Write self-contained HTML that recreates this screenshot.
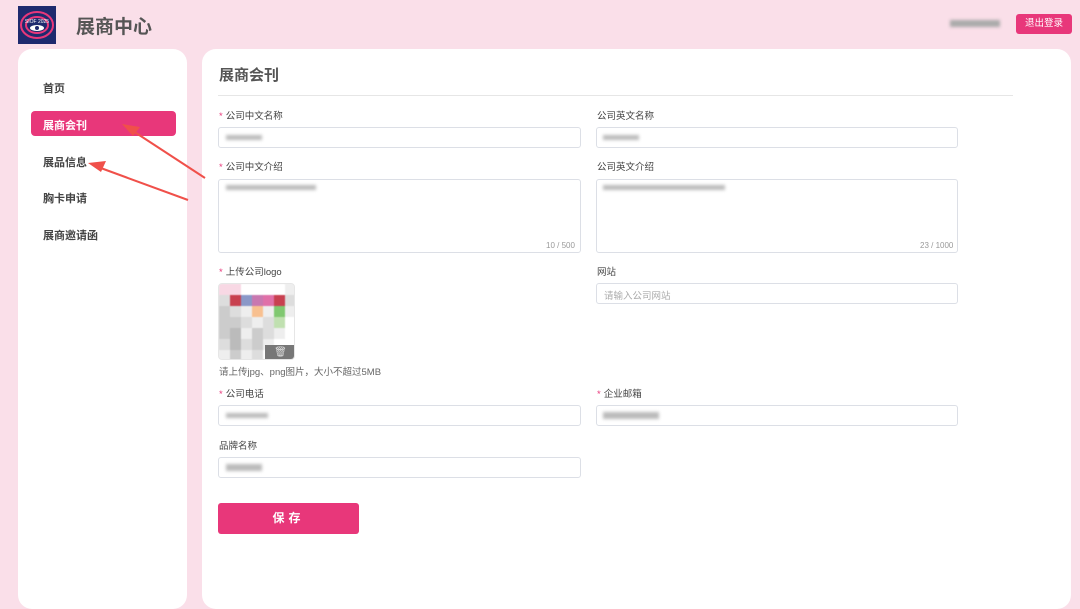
<!DOCTYPE html>
<html><head><meta charset="utf-8"><style>
*{margin:0;padding:0;box-sizing:border-box}
body{width:1080px;height:596px;background:#fadfe9;font-family:"Liberation Sans","Noto Sans CJK SC",sans-serif;position:relative;overflow:hidden;color:#333}
.a{position:absolute}
.card{position:absolute;background:#fff;border-radius:14px}
.menu{position:absolute;left:43px;font-size:11px;font-weight:bold;color:#444}
.lbl{position:absolute;font-size:9.5px;color:#444}
.lbl b{color:#e8377a;font-weight:normal;margin-right:3px}
.inp{position:absolute;border:1px solid #dcdfe6;border-radius:3px;background:#fff}
.blur{position:absolute;background:#bbb;filter:blur(1.5px);height:5px}
.cnt{position:absolute;font-size:8px;color:#999}
</style></head><body>
<svg class="a" style="left:18px;top:6px" width="38" height="38" viewBox="0 0 38 38">
<rect width="38" height="38" fill="#1e2a6e"/>
<g fill="none" stroke="#e8377a" stroke-width="2">
<ellipse cx="19" cy="19" rx="16" ry="13"/><ellipse cx="19" cy="19" rx="11" ry="8"/></g>
<ellipse cx="19" cy="22" rx="7" ry="3" fill="#fff"/><circle cx="19" cy="22" r="2" fill="#1e2a6e"/>
<text x="19" y="17" font-size="5" fill="#fff" text-anchor="middle" font-family="Liberation Sans">SIOF 2025</text>
</svg>
<div class="a" style="left:76px;top:12px;font-size:19px;font-weight:bold;color:#555">展商中心</div>
<div class="blur" style="left:950px;top:20px;width:50px;height:7px;background:#aaa"></div>
<div class="a" style="left:1016px;top:14px;width:56px;height:20px;background:#e8377a;border-radius:3px;color:#fff;font-size:9.5px;text-align:center;line-height:20px">退出登录</div>

<div class="card" style="left:18px;top:49px;width:169px;height:560px"></div>
<div class="menu" style="top:80px">首页</div>
<div class="a" style="left:31px;top:111px;width:145px;height:25px;background:#e8377a;border-radius:4px"></div>
<div class="menu" style="top:117px;color:#fff">展商会刊</div>
<div class="menu" style="top:154px">展品信息</div>
<div class="menu" style="top:190px">胸卡申请</div>
<div class="menu" style="top:227px">展商邀请函</div>

<div class="card" style="left:202px;top:49px;width:869px;height:560px"></div>
<div class="a" style="left:219px;top:64px;font-size:15px;font-weight:bold;color:#555">展商会刊</div>
<div class="a" style="left:218px;top:95px;width:795px;height:1px;background:#e6e6e6"></div>

<div class="lbl" style="left:219px;top:108px"><b>*</b>公司中文名称</div>
<div class="inp" style="left:218px;top:127px;width:363px;height:21px"></div>
<div class="blur" style="left:226px;top:135px;width:36px"></div>
<div class="lbl" style="left:597px;top:108px">公司英文名称</div>
<div class="inp" style="left:596px;top:127px;width:362px;height:21px"></div>
<div class="blur" style="left:603px;top:135px;width:36px"></div>

<div class="lbl" style="left:219px;top:159px"><b>*</b>公司中文介绍</div>
<div class="inp" style="left:218px;top:179px;width:363px;height:74px"></div>
<div class="blur" style="left:226px;top:185px;width:90px"></div>
<div class="cnt" style="left:546px;top:241px">10 / 500</div>
<div class="lbl" style="left:597px;top:159px">公司英文介绍</div>
<div class="inp" style="left:596px;top:179px;width:362px;height:74px"></div>
<div class="blur" style="left:603px;top:185px;width:122px"></div>
<div class="cnt" style="left:920px;top:241px">23 / 1000</div>

<div class="lbl" style="left:219px;top:264px"><b>*</b>上传公司logo</div>
<div class="a" style="left:218px;top:283px;width:77px;height:77px;border:1px solid #e6e6e6;border-radius:4px;overflow:hidden;background:#eee">
<div class="a" style="left:0;top:0;width:77px;height:77px;display:grid;grid-template-columns:repeat(7,11px);filter:blur(.6px)">
<div style="background:#f8d8e4"></div><div style="background:#f8d8e4"></div><div style="background:#fff"></div><div style="background:#fff"></div><div style="background:#fff"></div><div style="background:#fff"></div><div style="background:#eee"></div>
<div style="background:#ddd"></div><div style="background:#c8404f"></div><div style="background:#8a98c8"></div><div style="background:#c878b0"></div><div style="background:#e070a8"></div><div style="background:#c84050"></div><div style="background:#ddd"></div>
<div style="background:#ccc"></div><div style="background:#ddd"></div><div style="background:#eee"></div><div style="background:#f8c090"></div><div style="background:#eee"></div><div style="background:#80c870"></div><div style="background:#eee"></div>
<div style="background:#ccc"></div><div style="background:#ccc"></div><div style="background:#ddd"></div><div style="background:#eee"></div><div style="background:#ddd"></div><div style="background:#c0e0b0"></div><div style="background:#fff"></div>
<div style="background:#ccc"></div><div style="background:#bbb"></div><div style="background:#eee"></div><div style="background:#ccc"></div><div style="background:#ddd"></div><div style="background:#eee"></div><div style="background:#fff"></div>
<div style="background:#ddd"></div><div style="background:#bbb"></div><div style="background:#ddd"></div><div style="background:#ccc"></div><div style="background:#eee"></div><div style="background:#fff"></div><div style="background:#fff"></div>
<div style="background:#eee"></div><div style="background:#ccc"></div><div style="background:#eee"></div><div style="background:#ddd"></div><div style="background:#fff"></div><div style="background:#fff"></div><div style="background:#fff"></div>
</div>
<div class="a" style="left:46px;top:61px;width:31px;height:16px;background:#777;color:#ddd;font-size:10px;text-align:center;line-height:16px">🗑</div>
</div>
<div class="a" style="left:219px;top:364px;font-size:9.5px;color:#666">请上传jpg、png图片，大小不超过5MB</div>
<div class="lbl" style="left:597px;top:264px">网站</div>
<div class="inp" style="left:596px;top:283px;width:362px;height:21px"></div>
<div class="a" style="left:604px;top:288px;font-size:9.5px;color:#aaa">请输入公司网站</div>

<div class="lbl" style="left:219px;top:386px"><b>*</b>公司电话</div>
<div class="inp" style="left:218px;top:405px;width:363px;height:21px"></div>
<div class="blur" style="left:226px;top:413px;width:42px"></div>
<div class="lbl" style="left:597px;top:386px"><b>*</b>企业邮箱</div>
<div class="inp" style="left:596px;top:405px;width:362px;height:21px"></div>
<div class="blur" style="left:603px;top:412px;width:56px;height:7px"></div>

<div class="lbl" style="left:219px;top:438px">品牌名称</div>
<div class="inp" style="left:218px;top:457px;width:363px;height:21px"></div>
<div class="blur" style="left:226px;top:464px;width:36px;height:7px"></div>

<div class="a" style="left:218px;top:503px;width:141px;height:31px;background:#e8377a;border-radius:3px;color:#fff;font-size:12px;font-weight:bold;text-align:center;line-height:31px;letter-spacing:4px">保存</div>

<svg class="a" style="left:0;top:0" width="260" height="260">
<g stroke="#f0504a" stroke-width="2" fill="#f0504a">
<line x1="205" y1="178" x2="130" y2="129"/>
<line x1="188" y1="200" x2="98" y2="167"/>
</g>
<polygon points="122,124 140,127 133,136" fill="#f0504a"/>
<polygon points="88,163 106,161 101,172" fill="#f0504a"/>
</svg>
</body></html>
